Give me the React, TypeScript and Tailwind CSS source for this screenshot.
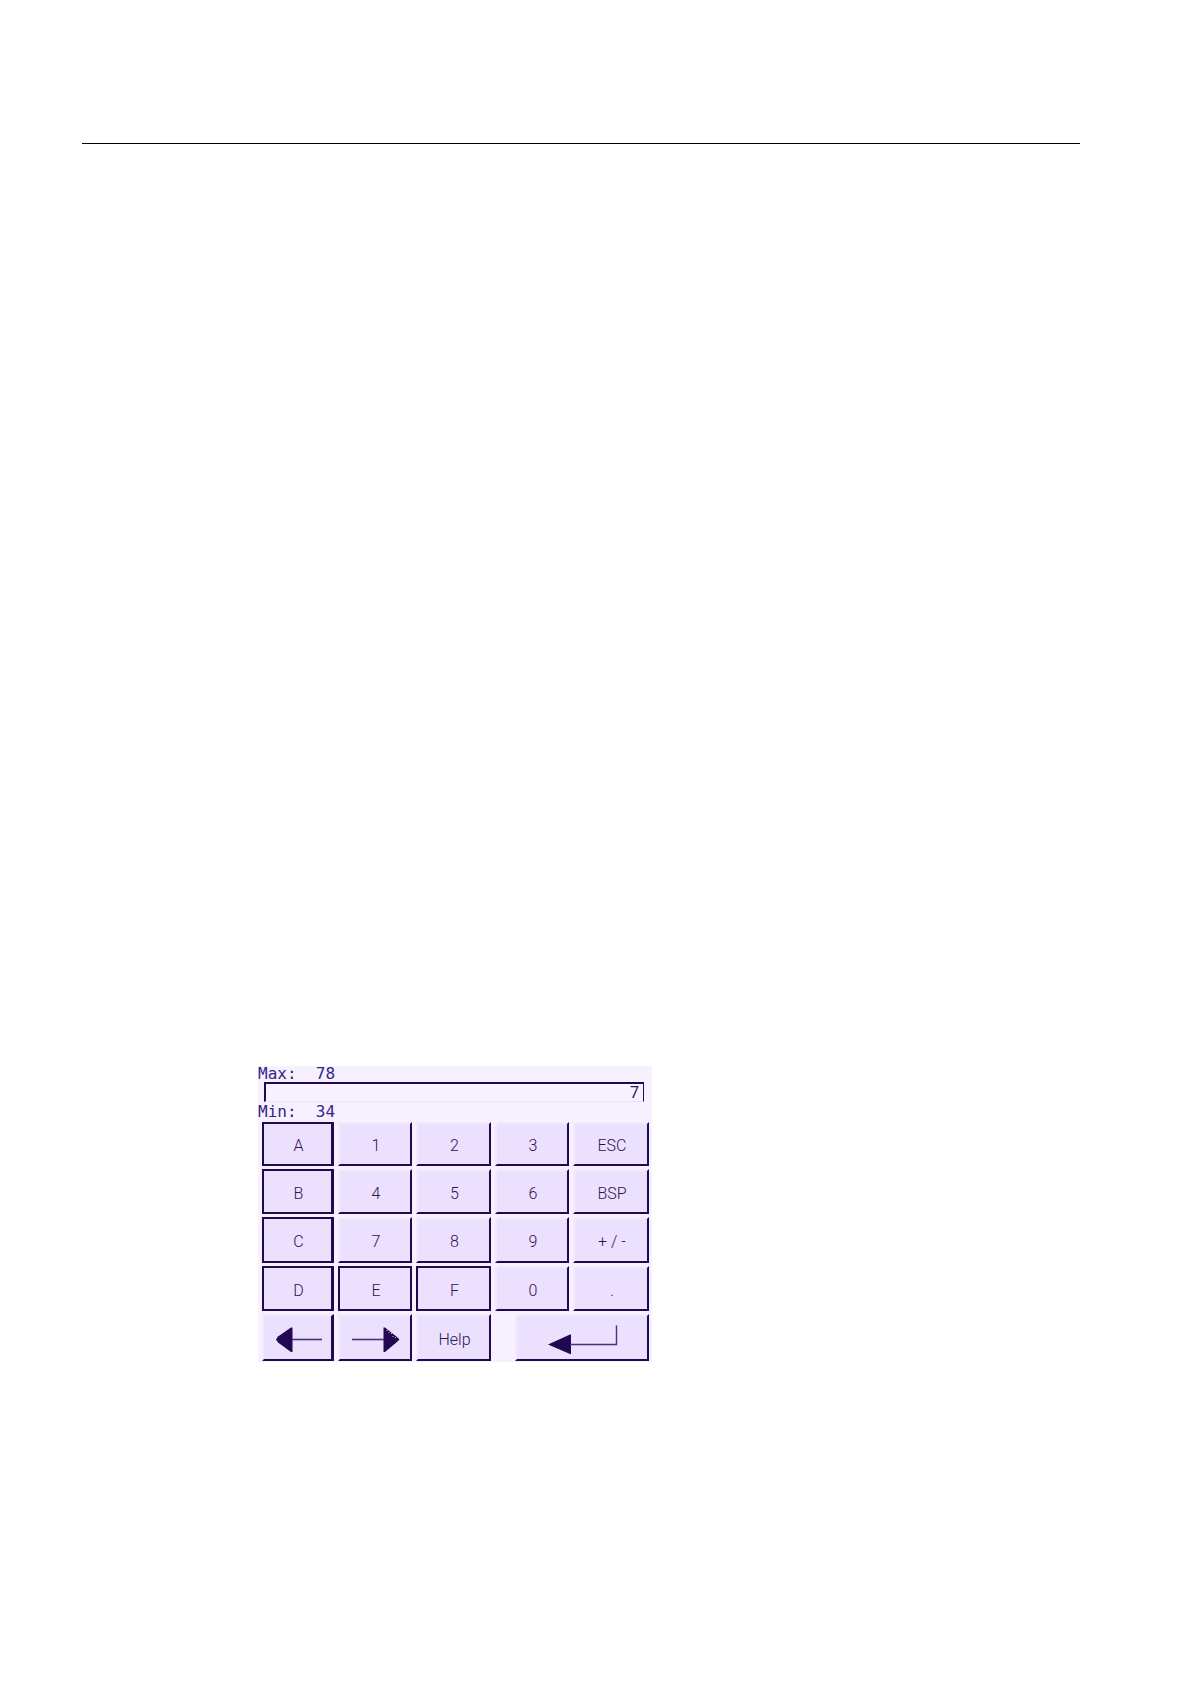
import React, { useState } from 'react';
import clsx from 'clsx';

interface IKeyProps {
  label: React.ReactNode;
  name?: string;
  outlined?: boolean;
  className?: string;
  onClick?: () => void;
}

interface IKeyData {
  text: string;
  outlined?: boolean;
}

const KEYS: IKeyData[] = [
  { text: 'A', outlined: true },
  { text: '1' },
  { text: '2' },
  { text: '3' },
  { text: 'ESC' },
  { text: 'B', outlined: true },
  { text: '4' },
  { text: '5' },
  { text: '6' },
  { text: 'BSP' },
  { text: 'C', outlined: true },
  { text: '7' },
  { text: '8' },
  { text: '9' },
  { text: '+ / -' },
  { text: 'D', outlined: true },
  { text: 'E', outlined: true },
  { text: 'F', outlined: true },
  { text: '0' },
  { text: '.' },
];

const Key = ({ label, name, outlined, className, onClick }: IKeyProps) => (
  <button
    type="button"
    aria-label={name}
    onClick={onClick}
    className={clsx(
      'flex items-center justify-center border-2 border-r-[#220850] border-b-[#220850] bg-[#ebe0fd] pt-1 pl-0.5 text-[#2b1452]',
      outlined ? 'border-t-[#220850] border-l-[#220850]' : 'border-t-[#f3eafe] border-l-[#f3eafe]',
      className,
    )}
  >
    {label}
  </button>
);

const ArrowLeft = () => (
  <svg width="46" height="26" viewBox="0 0 46 26" aria-hidden="true">
    <path d="M0 12.5 L2 9.5 L15 0.5 H16.5 V25 H15 L2 15.5Z" fill="#220850" />
    <path d="M16 12.5 H46" stroke="#4b2f78" strokeWidth="1.6" />
  </svg>
);

const ArrowRight = () => (
  <svg width="48" height="26" viewBox="0 0 48 26" aria-hidden="true">
    <path d="M31.5 0.5 H33 L45 10 L47.5 12.5 L45 15 L33 25 H31.5Z" fill="#220850" />
    <path d="M34.5 3.5h1M36.5 5.5h1M39 6.5h1M40.5 9.5h1M43 10.5h1" stroke="#cdbbe8" />
    <path d="M0 12.5 H32" stroke="#4b2f78" strokeWidth="1.6" />
  </svg>
);

const ArrowEnter = () => (
  <svg width="70" height="30" viewBox="0 0 70 30" aria-hidden="true">
    <path d="M0 19.5 L22 9.5 H23 V29 H22Z" fill="#220850" />
    <path d="M22 19.5 H68.5 V0.5" fill="none" stroke="#4b2f78" strokeWidth="1.4" />
  </svg>
);

export default function App() {
  const [value, setValue] = useState('7');

  const handleKey = (text: string) => {
    if (text === 'ESC') setValue('');
    else if (text === 'BSP') setValue(value.slice(0, -1));
    else if (text === '+ / -') setValue(value.startsWith('-') ? value.slice(1) : `-${value}`);
    else setValue(value + text);
  };

  return (
    <main className="min-h-screen bg-white pt-[143px] pr-[110px] pl-[82px]">
      <hr className="border-t border-black" />
      <section className="mt-[922px] ml-44 max-w-[394px] bg-[#f7f0fe] pb-px font-['DejaVu_Sans_Mono',monospace] text-base leading-4 text-[#34248a]">
        <p className="whitespace-pre">Max:  78</p>
        <input
          type="text"
          aria-label="Value"
          value={value}
          onChange={(event) => setValue(event.target.value)}
          className="mr-2 ml-1.5 block h-5 w-[calc(100%-14px)] border-t-2 border-r border-b border-l-2 border-[#220850] border-b-[#ebe2f5] bg-[#f8f1ff] px-1 text-right font-['Roboto',sans-serif] text-base text-[#2b1452] outline-none"
        />
        <p className="pt-0.5 whitespace-pre">Min:  34</p>
        <div className="mt-0.5 mr-[3px] ml-1 grid grid-cols-[72fr_74fr_75fr_74fr_76fr] grid-rows-[44px_45px_46px_45px_47px] gap-x-1 gap-y-[3px] font-['Roboto',sans-serif] text-base font-light">
          {KEYS.map(({ text, outlined }, index) => (
            <Key
              key={text}
              label={text}
              outlined={outlined}
              className={index % 5 === 0 ? 'border-r-3' : undefined}
              onClick={() => handleKey(text)}
            />
          ))}
          <Key label={<ArrowLeft />} name="Cursor left" className="border-r-3" />
          <Key label={<ArrowRight />} name="Cursor right" />
          <Key label="Help" />
          <Key label={<ArrowEnter />} name="Enter" className="col-span-2 ml-5" />
        </div>
      </section>
    </main>
  );
}
